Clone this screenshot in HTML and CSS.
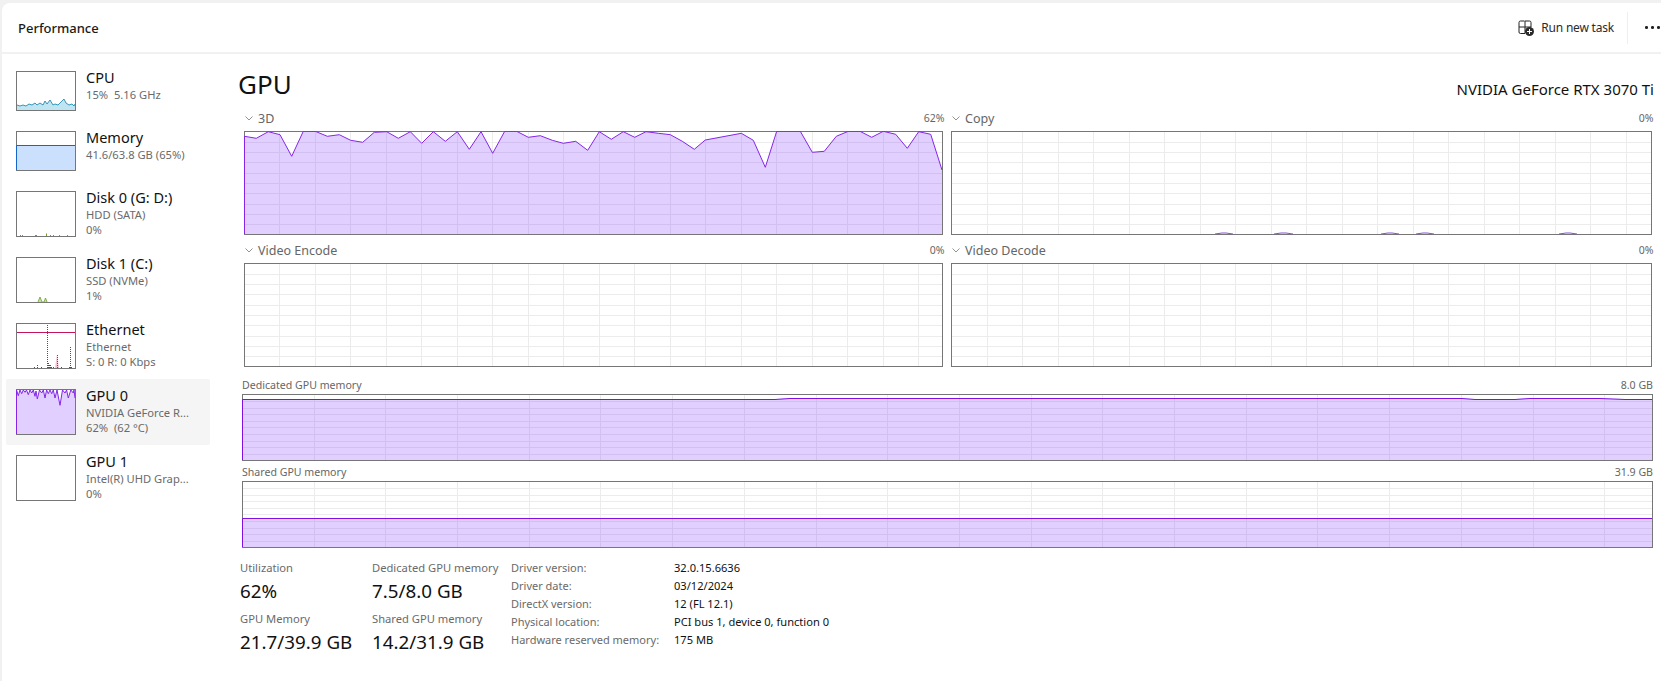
FILE: index.html
```html
<!DOCTYPE html>
<html lang="en">
<head>
<meta charset="utf-8">
<title>Performance</title>
<link rel="stylesheet" href="styles.css">
</head>
<body>
<svg class="defs" width="0" height="0" aria-hidden="true">
  <defs>
    <path id="grid-a" class="gridline" d="M35.500 1V103M71.500 1V103M106.500 1V103M142.500 1V103M177.500 1V103M213.500 1V103M248.500 1V103M284.500 1V103M319.500 1V103M355.500 1V103M390.500 1V103M426.500 1V103M461.500 1V103M497.500 1V103M532.500 1V103M568.500 1V103M603.500 1V103M639.500 1V103M674.500 1V103M1 11.500H698M1 21.500H698M1 31.500H698M1 42.500H698M1 52.500H698M1 62.500H698M1 73.500H698M1 83.500H698M1 93.500H698"/>
    <path id="grid-b" class="gridline" d="M36.500 1V103M71.500 1V103M107.500 1V103M142.500 1V103M178.500 1V103M213.500 1V103M249.500 1V103M284.500 1V103M320.500 1V103M355.500 1V103M391.500 1V103M426.500 1V103M462.500 1V103M497.500 1V103M533.500 1V103M568.500 1V103M604.500 1V103M639.500 1V103M675.500 1V103M1 11.500H700M1 21.500H700M1 31.500H700M1 42.500H700M1 52.500H700M1 62.500H700M1 73.500H700M1 83.500H700M1 93.500H700"/>
    <path id="grid-m" class="gridline" d="M72.500 1V66M143.500 1V66M215.500 1V66M287.500 1V66M358.500 1V66M430.500 1V66M502.500 1V66M574.500 1V66M645.500 1V66M717.500 1V66M789.500 1V66M860.500 1V66M932.500 1V66M1004.500 1V66M1075.500 1V66M1147.500 1V66M1219.500 1V66M1291.500 1V66M1362.500 1V66M1 7.500H1410M1 14.500H1410M1 20.500H1410M1 27.500H1410M1 33.500H1410M1 40.500H1410M1 47.500H1410M1 53.500H1410M1 60.500H1410"/>
  </defs>
</svg>
<div class="app">
  <header class="topbar">
    <div class="page-title">Performance</div>
    <div class="actions">
      <svg class="run-icon" viewBox="0 0 16 16" width="16" height="16"><path d="M6.500 1H2.500A1.500 1.500 0 0 0 1 2.500V12A1.500 1.500 0 0 0 2.500 13.500H7M1 7H13M7 1H11.500A1.500 1.500 0 0 1 13 2.500V7M7 1V13" fill="none" stroke="#222" stroke-width="1"/><circle cx="11.500" cy="11.500" r="4.500" fill="#2b2b2b"/><path d="M11.500 9V14M9 11.500H14" stroke="#fff" stroke-width="1"/></svg>
      <span class="run-label">Run new task</span>
      <span class="sep"></span>
      <span class="dots"><i></i><i></i><i></i></span>
    </div>
  </header>
  <div class="body">
    <nav class="sidebar">
      <div class="row">
        <svg class="spark short" viewBox="0 0 58 38" preserveAspectRatio="none"><polygon class="cpu-fill" points="0,38 0,33 3,34 6,33 9,34 12,32 15,33 18,31 20,33 23,31 26,33 28,29 30,32 33,28 36,33 38,32 41,33 44,30 47,27 49,31 52,33 55,32 57,34 58,32 58,38"/><polyline class="cpu-line" points="0,33 3,34 6,33 9,34 12,32 15,33 18,31 20,33 23,31 26,33 28,29 30,32 33,28 36,33 38,32 41,33 44,30 47,27 49,31 52,33 55,32 57,34 58,32"/></svg>
        <div class="row-text"><div class="row-name">CPU</div><div class="row-sub">15%&nbsp; 5.16 GHz</div></div>
      </div>
      <div class="row">
        <svg class="spark short" viewBox="0 0 58 38" preserveAspectRatio="none"><rect class="mem-fill" x="0" y="13.500" width="58" height="24.500"/><path class="mem-line" d="M-0.500 38V13.500H58"/></svg>
        <div class="row-text"><div class="row-name">Memory</div><div class="row-sub">41.6/63.8 GB (65%)</div></div>
      </div>
      <div class="row">
        <svg class="spark" viewBox="0 0 58 44" preserveAspectRatio="none"><path class="disk-dots" d="M3.500 44V43M5.500 44V43M19.500 44V43M18.500 44V43M29.500 44V41.500M33.500 44V43M36.500 44V43M42.500 44V43M50.500 44V43"/></svg>
        <div class="row-text"><div class="row-name">Disk 0 (G: D:)</div><div class="row-sub">HDD (SATA)</div><div class="row-sub">0%</div></div>
      </div>
      <div class="row">
        <svg class="spark" viewBox="0 0 58 44" preserveAspectRatio="none"><polygon class="disk-fill" points="21,44 23,39 25,44 27,44 28.500,40 30,44"/><polyline class="disk-line" points="21,44 23,39 25,44 27,44 28.500,40 30,44"/></svg>
        <div class="row-text"><div class="row-name">Disk 1 (C:)</div><div class="row-sub">SSD (NVMe)</div><div class="row-sub">1%</div></div>
      </div>
      <div class="row">
        <svg class="spark" viewBox="0 0 58 44" preserveAspectRatio="none"><path class="eth-max" d="M0 8.500H58"/><polygon class="eth-fill" points="38,44 40,30 42,44"/><path class="eth-dots" d="M30.500 44V0M40.500 44V30M53.500 44V23M17.500 44V42M20.500 44V41M24.500 44V42M31.500 44V38M32.500 44V40M33.500 44V41M34.500 44V42M36.500 44V42M44.500 44V43M52.500 44V42M54.500 44V42"/></svg>
        <div class="row-text"><div class="row-name">Ethernet</div><div class="row-sub">Ethernet</div><div class="row-sub">S: 0 R: 0 Kbps</div></div>
      </div>
      <div class="row selected">
        <svg class="spark" viewBox="0 0 58 44" preserveAspectRatio="none"><polygon class="gpu-fill" points="0,44 0,0 1.300,5.700 3,0 4.700,3.700 6.300,0 8,2.300 9.500,0 11.300,4.700 13,0 14.700,3 16.300,0 18,6.300 19,1 20.300,9 22.500,0 24.700,3 26.300,0 28,8 29.600,0 31.300,3.700 33,0 34.700,3.700 36.300,0 38,8 40,0 43,15.300 45.500,0 48,3 49.600,0 51.300,8 53.800,0 56.300,3 57,0 58,8 58,44"/><polyline class="gpu-line" points="-0.500,44 -0.500,0 1.300,5.700 3,0 4.700,3.700 6.300,0 8,2.300 9.500,0 11.300,4.700 13,0 14.700,3 16.300,0 18,6.300 19,1 20.300,9 22.500,0 24.700,3 26.300,0 28,8 29.600,0 31.300,3.700 33,0 34.700,3.700 36.300,0 38,8 40,0 43,15.300 45.500,0 48,3 49.600,0 51.300,8 53.800,0 56.300,3 57,0 58,8"/></svg>
        <div class="row-text"><div class="row-name">GPU 0</div><div class="row-sub">NVIDIA GeForce R...</div><div class="row-sub">62%&nbsp; (62 °C)</div></div>
      </div>
      <div class="row">
        <svg class="spark" viewBox="0 0 58 44" preserveAspectRatio="none"></svg>
        <div class="row-text"><div class="row-name">GPU 1</div><div class="row-sub">Intel(R) UHD Grap...</div><div class="row-sub">0%</div></div>
      </div>
    </nav>
    <main class="main">
      <div class="head">
        <h1 class="gpu-title">GPU</h1>
        <div class="gpu-model">NVIDIA GeForce RTX 3070 Ti</div>
      </div>
      <section class="engines">
        <div class="engine">
          <div class="chart-label"><span class="left"><svg class="chev" viewBox="0 0 8 5" width="8" height="5"><path d="M0.500 0.500L4 4L7.500 0.500"/></svg>3D</span><span class="pct">62%</span></div>
          <div class="plot">
            <svg class="plot-svg" viewBox="244 131 699 104" preserveAspectRatio="none"><use href="#grid-a" x="244" y="131"/><polygon class="gpu-fill" points="244,234 244,136.300 256.300,138.300 268.300,131.700 280,134.700 291.700,156.300 303.300,131.300 315.300,131.300 327.300,136.300 339.300,134.700 350.700,140.300 362.700,142.300 374.300,132.300 386.700,131.700 398.300,138.300 410.300,131.700 421.700,143.300 433.300,131.700 445.300,141.300 457.300,131.700 469.300,149.300 481,131.700 492.700,153.300 504.700,131.300 516.700,131.300 528.300,137.300 540.300,135.700 552.300,140.300 563.300,143.300 575.700,141.300 587.700,150.300 599.300,131.700 611.300,139.300 623.300,131.700 634.700,137.300 646,131.700 658.300,133.300 670.300,134.700 682.300,141.300 694.300,149.300 705.300,140 741.300,133.300 753.300,140.300 765.300,167.300 776.700,131.300 800.300,131.300 812.300,152.300 824.300,151.300 836.300,136.300 848.300,131.300 860,131.300 871.700,137.300 883.300,131.300 895.700,134.300 907.300,148.300 918.700,131.700 930.700,134.300 942,170 942,234"/><polyline class="gpu-line" points="244.500,234 244.500,136.300 256.300,138.300 268.300,131.700 280,134.700 291.700,156.300 303.300,131.300 315.300,131.300 327.300,136.300 339.300,134.700 350.700,140.300 362.700,142.300 374.300,132.300 386.700,131.700 398.300,138.300 410.300,131.700 421.700,143.300 433.300,131.700 445.300,141.300 457.300,131.700 469.300,149.300 481,131.700 492.700,153.300 504.700,131.300 516.700,131.300 528.300,137.300 540.300,135.700 552.300,140.300 563.300,143.300 575.700,141.300 587.700,150.300 599.300,131.700 611.300,139.300 623.300,131.700 634.700,137.300 646,131.700 658.300,133.300 670.300,134.700 682.300,141.300 694.300,149.300 705.300,140 741.300,133.300 753.300,140.300 765.300,167.300 776.700,131.300 800.300,131.300 812.300,152.300 824.300,151.300 836.300,136.300 848.300,131.300 860,131.300 871.700,137.300 883.300,131.300 895.700,134.300 907.300,148.300 918.700,131.700 930.700,134.300 942,170"/></svg>
          </div>
        </div>
        <div class="engine">
          <div class="chart-label"><span class="left"><svg class="chev" viewBox="0 0 8 5" width="8" height="5"><path d="M0.500 0.500L4 4L7.500 0.500"/></svg>Copy</span><span class="pct">0%</span></div>
          <div class="plot">
            <svg class="plot-svg" viewBox="0 0 701 104" preserveAspectRatio="none"><use href="#grid-b"/><path class="copy-bump" d="M264 103L271 102H275L282 103M323 103L330 102H335L342 103M430 103L437 102H441L448 103M465 103L472 102H476L483 103M608 103L615 102H619L626 103"/></svg>
          </div>
        </div>
        <div class="engine">
          <div class="chart-label"><span class="left"><svg class="chev" viewBox="0 0 8 5" width="8" height="5"><path d="M0.500 0.500L4 4L7.500 0.500"/></svg>Video Encode</span><span class="pct">0%</span></div>
          <div class="plot">
            <svg class="plot-svg" viewBox="0 0 699 104" preserveAspectRatio="none"><use href="#grid-a"/></svg>
          </div>
        </div>
        <div class="engine">
          <div class="chart-label"><span class="left"><svg class="chev" viewBox="0 0 8 5" width="8" height="5"><path d="M0.500 0.500L4 4L7.500 0.500"/></svg>Video Decode</span><span class="pct">0%</span></div>
          <div class="plot">
            <svg class="plot-svg" viewBox="0 0 701 104" preserveAspectRatio="none"><use href="#grid-b"/></svg>
          </div>
        </div>
      </section>
      <section class="memory">
        <div class="mem-label"><span>Dedicated GPU memory</span><span>8.0 GB</span></div>
        <div class="mem-plot">
          <svg class="plot-svg" viewBox="242 394 1411 67" preserveAspectRatio="none"><use href="#grid-m" x="242" y="394"/><polygon class="gpu-fill" points="242,460 242,399 775,399 790,398 1462,398 1475,399 1515,399 1530,398 1600,398 1625,399 1652,399 1652,460"/><polyline class="gpu-line mem" points="242.500,460 242.500,399.500 775,399.500 790,398.500 1462,398.500 1475,399.500 1515,399.500 1530,398.500 1600,398.500 1625,399.500 1652,399.500"/></svg>
        </div>
        <div class="mem-label second"><span>Shared GPU memory</span><span>31.9 GB</span></div>
        <div class="mem-plot">
          <svg class="plot-svg" viewBox="242 481 1411 67" preserveAspectRatio="none"><use href="#grid-m" x="242" y="481"/><polygon class="gpu-fill" points="242,547 242,518 1652,518 1652,547"/><polyline class="gpu-line mem" points="242.500,547 242.500,518.500 1652,518.500"/></svg>
        </div>
      </section>
      <section class="stats">
        <div class="stat-col first">
          <div class="stat"><div class="stat-label">Utilization</div><div class="stat-value">62%</div></div>
          <div class="stat"><div class="stat-label">GPU Memory</div><div class="stat-value">21.7/39.9 GB</div></div>
        </div>
        <div class="stat-col second">
          <div class="stat"><div class="stat-label">Dedicated GPU memory</div><div class="stat-value">7.5/8.0 GB</div></div>
          <div class="stat"><div class="stat-label">Shared GPU memory</div><div class="stat-value">14.2/31.9 GB</div></div>
        </div>
        <div class="info">
          <div class="info-key">Driver version:</div><div class="info-val">32.0.15.6636</div>
          <div class="info-key">Driver date:</div><div class="info-val">03/12/2024</div>
          <div class="info-key">DirectX version:</div><div class="info-val">12 (FL 12.1)</div>
          <div class="info-key">Physical location:</div><div class="info-val">PCI bus 1, device 0, function 0</div>
          <div class="info-key">Hardware reserved memory:</div><div class="info-val">175 MB</div>
        </div>
      </section>
    </main>
  </div>
</div>
</body>
</html>
```
FILE: styles.css
```css
* { box-sizing: border-box; }
html, body { margin: 0; height: 100%; overflow: hidden; }
body {
  background: #f1f1f1;
  padding: 3px 0 0 2px;
  font-family: "Noto Sans", "Open Sans", sans-serif;
  color: #1a1a1a;
}
.defs { position: absolute; }
.gridline { fill: none; stroke: #ececec; stroke-width: 1; shape-rendering: crispEdges; }
.app {
  height: 100%;
  background: #fff;
  border-top-left-radius: 8px;
  display: flex;
  flex-direction: column;
}
.topbar {
  height: 51px;
  flex: none;
  display: flex;
  align-items: center;
  justify-content: space-between;
  border-bottom: 2px solid #f1f1f1;
  padding-left: 16px;
}
.page-title { font-size: 13px; font-weight: 500; }
.actions { display: flex; align-items: center; height: 32px; }
.run-icon { margin-right: 7px; }
.run-label { font-size: 12px; color: #2b2b2b; letter-spacing: -0.2px; }
.sep { width: 1px; height: 32px; background: #efefef; margin: 0 17px 0 13px; }
.dots { display: flex; gap: 3.5px; width: 16px; }
.dots i { width: 2.500px; height: 2.500px; background: #222; border-radius: 50%; flex: none; }
.body { flex: 1; display: flex; min-height: 0; }
.sidebar { width: 208px; flex: none; padding: 7px 0 0 4px; }
.row { display: flex; gap: 10px; padding: 10px; align-items: flex-start; }
.row.selected { background: #f5f5f5; border-radius: 2px; }
.spark { width: 60px; height: 46px; flex: none; border: 1px solid #767676; background: #fff; display: block; overflow: visible; }
.spark.short { height: 40px; }
.row-text { margin: -3px 0; white-space: nowrap; }
.row-name { font-size: 14.500px; line-height: 19px; color: #111; }
.row-sub { font-size: 11.200px; line-height: 15px; color: #6a6a6a; }
.cpu-fill { fill: #bfe5f3; }
.cpu-line { fill: none; stroke: #117da3; stroke-width: 0.8; }
.mem-fill { fill: #cbe0fd; }
.mem-line { fill: none; stroke: #1566cc; stroke-width: 1; }
.disk-dots { fill: none; stroke: #6f9e2f; stroke-width: 1; }
.disk-fill { fill: #c9e0a8; }
.disk-line { fill: none; stroke: #6f9e2f; stroke-width: 0.8; }
.eth-max { fill: none; stroke: #c4155c; stroke-width: 1; }
.eth-fill { fill: #f3c4d6; }
.eth-dots { fill: none; stroke: #c4155c; stroke-width: 1; stroke-dasharray: 1 1; }
.gpu-fill { fill: rgba(130, 60, 255, 0.24); }
.gpu-line { fill: none; stroke: #8426ea; stroke-width: 1; }
.gpu-line.mem { stroke: #7d12e2; }
.copy-bump { fill: none; stroke: #8a4fd0; stroke-width: 1; }
.main { flex: 1; min-width: 0; padding: 0 8px 0 28px; display: flex; flex-direction: column; }
.head { height: 56px; display: flex; justify-content: space-between; align-items: flex-start; flex: none; }
.gpu-title { margin: 12px 0 0; font-size: 26px; line-height: 36px; font-weight: 400; color: #111; }
.gpu-model { margin: 25px -1px 0 0; font-size: 15px; line-height: 20px; color: #111; }
.engines { margin: 0 1px 0 6px; display: grid; grid-template-columns: 699px 1fr; column-gap: 8px; row-gap: 7px; }
.chart-label { height: 16px; margin-bottom: 5px; display: flex; justify-content: space-between; align-items: center; font-size: 12.500px; color: #666; white-space: nowrap; }
.chart-label .left { display: flex; align-items: center; gap: 5px; padding-left: 1px; }
.chart-label .pct { font-size: 10.500px; margin-right: -1.500px; color: #666; }
.chev { fill: none; stroke: #777; stroke-width: 0.8; }
.plot { height: 104px; border: 1px solid #767676; position: relative; }
.plot-svg { position: absolute; top: -1px; left: -1px; width: calc(100% + 2px); height: calc(100% + 2px); display: block; }
.memory { margin: 10px 0 0 4px; }
.mem-label { height: 16px; margin-bottom: 1px; display: flex; justify-content: space-between; align-items: center; font-size: 10.600px; color: #666; }
.mem-label.second { margin-top: 3px; }
.mem-plot { height: 67px; border: 1px solid #767676; position: relative; }
.stats { margin: 12px 0 0 2px; display: flex; }
.stat-col.first { width: 132px; }
.stat-col.second { width: 139px; }
.stat { height: 51px; }
.stat-label { font-size: 11.200px; line-height: 16px; color: #6a6a6a; white-space: nowrap; }
.stat-value { margin-top: 2px; font-size: 18.800px; line-height: 26px; color: #111; white-space: nowrap; }
.info { display: grid; grid-template-columns: 163px auto; grid-auto-rows: 18px; align-content: start; font-size: 11px; line-height: 16px; }
.info-key { color: #6a6a6a; white-space: nowrap; }
.info-val { color: #111; white-space: nowrap; font-size: 11.100px; }
```
